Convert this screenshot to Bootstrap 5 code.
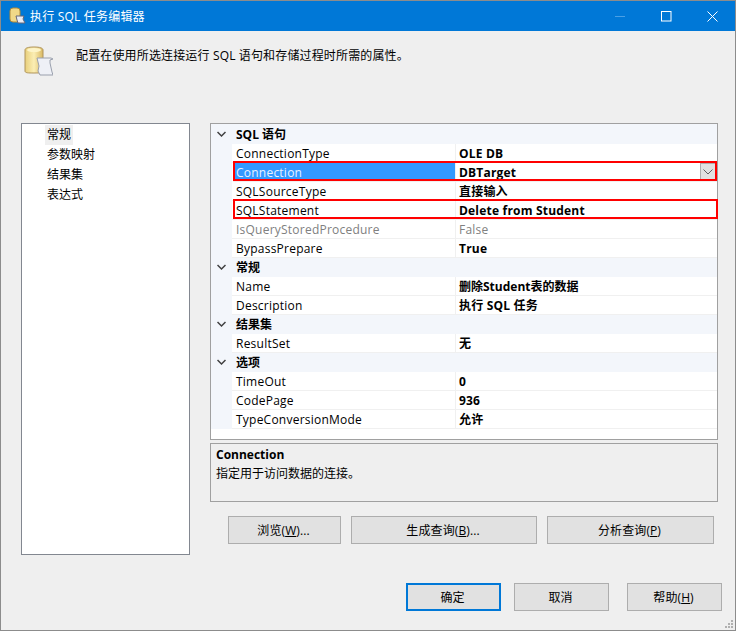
<!DOCTYPE html>
<html lang="zh">
<head>
<meta charset="utf-8">
<title>执行 SQL 任务编辑器</title>
<link href="https://cdn.jsdelivr.net/npm/bootstrap@5.3.0/dist/css/bootstrap.min.css" rel="stylesheet">
<style>
html,body{height:631px;overflow:hidden;}
body{width:736px;background:#efefef;color:#000;font:12px/19px "Open Sans","Noto Sans CJK SC",sans-serif;border:1px solid #8c8c8c;}
.wtitle{height:30px;background:#0078d7;color:#fff;padding-left:8px;font-size:12px;letter-spacing:.2px;}
.wtitle-text{margin-left:3px;}
.wctl{width:46px;height:30px;}
.hdr{height:92px;padding:15px 0 0 20px;}
.hdr-text{margin-left:23px;line-height:20px;letter-spacing:.15px;}
.main-area{padding-left:20px;height:432px;}
.nav-pane{width:169px;height:432px;background:#fff;border:1px solid #828790;padding:1px 0 0 25px;line-height:20px;}
.nav-pane div{height:20px;}
.nav-sel{display:inline-block;background:#efefef;padding:0 2px;margin-left:-2px;}
.right-pane{width:508px;margin-left:20px;}
.pgrid{height:317px;background:#fff;border:1px solid #a0a0a0;}
.pg-row{height:19px;}
.pg-head{height:19px;background:#f3f6fb;font-weight:700;}
.pg-head.firsth{height:20px;}
.pg-gut{width:21px;background:#f3f6fb;flex:none;}
.pg-name{width:224px;flex:none;padding:1px 0 0 4px;border-bottom:1px solid #f0f0f0;border-right:1px solid #f0f0f0;line-height:18px;letter-spacing:.23px;}
.pg-val{flex:1;padding:1px 0 0 3px;font-weight:700;border-bottom:1px solid #f0f0f0;line-height:18px;letter-spacing:.2px;}
.pg-val.no-track{letter-spacing:0;}
.is-sel{background:#3399ff;color:#e8f2ff;margin-left:1px;padding-left:3px;width:223px;}
.dim{color:#808080;font-weight:400;}
.red-box{position:absolute;left:22px;right:0;top:-2px;bottom:1px;border:2px solid #f00;pointer-events:none;}
.red-wide{right:-1px;bottom:1px;}
.combo-btn{position:absolute;right:1px;top:0;width:16px;height:18px;background:#e1e1e1;border:1px solid #adadad;}
.desc-box{height:59px;margin-top:3px;border:1px solid #a0a0a0;padding:2px 5px;line-height:18px;}
.desc-line{margin-top:1px;}
.wbtn{background:#e1e1e1;border:1px solid #adadad;border-radius:0;height:28px;font-size:12px;color:#000;padding:1px 2px 0 0;line-height:1;letter-spacing:.1px;}
.row-btns{padding:14px 4px 0 18px;gap:10px;}
.row-ok{padding:28px 13px 0 0;gap:13px;}
.w113{width:113px}.w186{width:186px}.w167{width:167px}.w95{width:95px}
.is-default{border:2px solid #0078d7;}
.gap-after{margin-right:5px;}
.grip{position:absolute;right:1px;bottom:1px;}
.acc{text-decoration:underline;}
</style>
</head>
<body class="position-relative">
<div class="wtitle d-flex align-items-center">
  <svg width="18" height="18" viewBox="0 0 18 18"><rect x="1" y="1" width="10" height="14" rx="3" fill="#f0d888" stroke="#b08a3a"/><path d="M7 9h8l-1 3 2 4H9l-1-3z" fill="#e8ecf4" stroke="#667"/></svg>
  <span class="wtitle-text flex-grow-1">执行 SQL 任务编辑器</span>
  <div class="wctl d-flex align-items-center justify-content-center"><svg width="11" height="11"><path d="M0 5.5h10" stroke="#4aa0e6"/></svg></div>
  <div class="wctl d-flex align-items-center justify-content-center"><svg width="11" height="11"><rect x=".5" y=".5" width="9.5" height="9.5" fill="none" stroke="#fff"/></svg></div>
  <div class="wctl d-flex align-items-center justify-content-center"><svg width="11" height="11"><path d="M.5.5l10 10M10.5.5l-10 10" stroke="#fff"/></svg></div>
</div>
<div class="hdr d-flex align-items-start">
  <svg width="32" height="32" viewBox="0 0 32 32"><defs><linearGradient id="cy" x1="0" x2="1"><stop offset="0" stop-color="#e8cf7c"/><stop offset=".5" stop-color="#fbeeb4"/><stop offset="1" stop-color="#d9b862"/></linearGradient></defs><path d="M4 4c0-2 3-3 9-3s9 1 9 3v21c0 2-3 2-9 2s-9 0-9-2z" fill="url(#cy)" stroke="#b0945a"/><ellipse cx="13" cy="4" rx="7" ry="2" fill="#fdf4c8"/><path d="M16 12h14l2 1-3 1v3l2 9 1 3H19l-2-4 1-5z" fill="#eef0f6" stroke="#9aa0ad"/></svg>
  <div class="hdr-text">配置在使用所选连接运行 SQL 语句和存储过程时所需的属性。</div>
</div>
<div class="main-area d-flex">
  <div class="nav-pane">
    <div><span class="nav-sel">常规</span></div><div>参数映射</div><div>结果集</div><div>表达式</div>
  </div>
  <div class="right-pane">
    <div class="pgrid">
      <div class="pg-head firsth d-flex align-items-center"><div class="pg-gut d-flex justify-content-center"><svg width="9" height="19" viewBox="0 0 9 19"><path d="M.5 7l4 4 4-4" fill="none" stroke="#404040" stroke-width="1.500"/></svg></div><div class="ps-1">SQL 语句</div></div>
      <div class="pg-row d-flex"><div class="pg-gut"></div><div class="pg-name">ConnectionType</div><div class="pg-val">OLE DB</div></div>
      <div class="pg-row d-flex position-relative"><div class="pg-gut"></div><div class="pg-name is-sel">Connection</div><div class="pg-val">DBTarget</div><div class="combo-btn d-flex align-items-center justify-content-center"><svg width="10" height="6"><path d="M.5.5l4.500 4.500 4.500-4.500" fill="none" stroke="#606060"/></svg></div><div class="red-box"></div></div>
      <div class="pg-row d-flex"><div class="pg-gut"></div><div class="pg-name">SQLSourceType</div><div class="pg-val">直接输入</div></div>
      <div class="pg-row d-flex position-relative"><div class="pg-gut"></div><div class="pg-name">SQLStatement</div><div class="pg-val">Delete from Student</div><div class="red-box red-wide"></div></div>
      <div class="pg-row d-flex"><div class="pg-gut"></div><div class="pg-name dim">IsQueryStoredProcedure</div><div class="pg-val dim">False</div></div>
      <div class="pg-row d-flex"><div class="pg-gut"></div><div class="pg-name">BypassPrepare</div><div class="pg-val">True</div></div>
      <div class="pg-head d-flex align-items-center"><div class="pg-gut d-flex justify-content-center"><svg width="9" height="19" viewBox="0 0 9 19"><path d="M.5 7l4 4 4-4" fill="none" stroke="#404040" stroke-width="1.500"/></svg></div><div class="ps-1">常规</div></div>
      <div class="pg-row d-flex"><div class="pg-gut"></div><div class="pg-name">Name</div><div class="pg-val no-track">删除Student表的数据</div></div>
      <div class="pg-row d-flex"><div class="pg-gut"></div><div class="pg-name">Description</div><div class="pg-val">执行 SQL 任务</div></div>
      <div class="pg-head d-flex align-items-center"><div class="pg-gut d-flex justify-content-center"><svg width="9" height="19" viewBox="0 0 9 19"><path d="M.5 7l4 4 4-4" fill="none" stroke="#404040" stroke-width="1.500"/></svg></div><div class="ps-1">结果集</div></div>
      <div class="pg-row d-flex"><div class="pg-gut"></div><div class="pg-name">ResultSet</div><div class="pg-val">无</div></div>
      <div class="pg-head d-flex align-items-center"><div class="pg-gut d-flex justify-content-center"><svg width="9" height="19" viewBox="0 0 9 19"><path d="M.5 7l4 4 4-4" fill="none" stroke="#404040" stroke-width="1.500"/></svg></div><div class="ps-1">选项</div></div>
      <div class="pg-row d-flex"><div class="pg-gut"></div><div class="pg-name">TimeOut</div><div class="pg-val">0</div></div>
      <div class="pg-row d-flex"><div class="pg-gut"></div><div class="pg-name">CodePage</div><div class="pg-val">936</div></div>
      <div class="pg-row d-flex"><div class="pg-gut"></div><div class="pg-name">TypeConversionMode</div><div class="pg-val">允许</div></div>
    </div>
    <div class="desc-box"><div class="fw-bold">Connection</div><div class="desc-line">指定用于访问数据的连接。</div></div>
    <div class="row-btns d-flex">
      <button class="btn wbtn w113">浏览(<span class="acc">W</span>)...</button>
      <button class="btn wbtn w186">生成查询(<span class="acc">B</span>)...</button>
      <button class="btn wbtn w167">分析查询(<span class="acc">P</span>)</button>
    </div>
  </div>
</div>
<div class="row-ok d-flex justify-content-end">
  <button class="btn wbtn w95 is-default">确定</button>
  <button class="btn wbtn w95 gap-after">取消</button>
  <button class="btn wbtn w95">帮助(<span class="acc">H</span>)</button>
</div>
<svg class="grip" width="10" height="10"><g fill="#b0b0b0"><rect x="7" y="1" width="2" height="2"/><rect x="4" y="4" width="2" height="2"/><rect x="7" y="4" width="2" height="2"/><rect x="1" y="7" width="2" height="2"/><rect x="4" y="7" width="2" height="2"/><rect x="7" y="7" width="2" height="2"/></g></svg>
<script src="https://cdn.jsdelivr.net/npm/bootstrap@5.3.0/dist/js/bootstrap.bundle.min.js"></script>
</body>
</html>
